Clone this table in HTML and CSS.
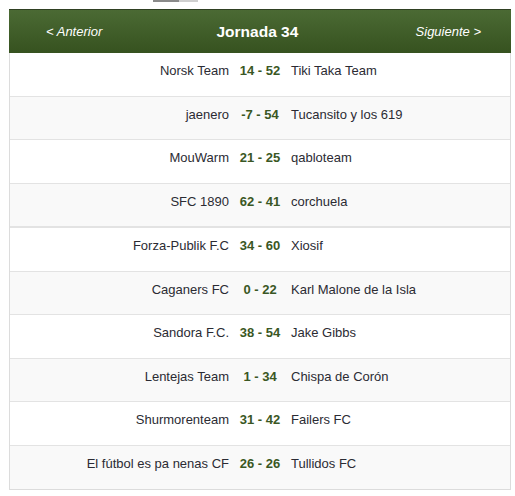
FILE: index.html
```html
<!DOCTYPE html>
<html lang="es">
<head>
<meta charset="utf-8">
<link rel="stylesheet" href="styles.css">
</head>
<body>
<div class="topbar"><span class="dark"></span><span class="light"></span></div>
<div class="fixtures">
  <div class="header">
    <a class="nav prev">&lt; Anterior</a>
    <span class="title">Jornada 34</span>
    <a class="nav next">Siguiente &gt;</a>
  </div>
  <div class="row"><span class="home">Norsk Team</span><span class="score">14 - 52</span><span class="away">Tiki Taka Team</span></div>
  <div class="row alt"><span class="home">jaenero</span><span class="score">-7 - 54</span><span class="away">Tucansito y los 619</span></div>
  <div class="row"><span class="home">MouWarm</span><span class="score">21 - 25</span><span class="away">qabloteam</span></div>
  <div class="row alt group-end"><span class="home">SFC 1890</span><span class="score">62 - 41</span><span class="away">corchuela</span></div>
  <div class="row"><span class="home">Forza-Publik F.C</span><span class="score">34 - 60</span><span class="away">Xiosif</span></div>
  <div class="row alt"><span class="home">Caganers FC</span><span class="score">0 - 22</span><span class="away">Karl Malone de la Isla</span></div>
  <div class="row"><span class="home">Sandora F.C.</span><span class="score">38 - 54</span><span class="away">Jake Gibbs</span></div>
  <div class="row alt"><span class="home">Lentejas Team</span><span class="score">1 - 34</span><span class="away">Chispa de Corón</span></div>
  <div class="row"><span class="home">Shurmorenteam</span><span class="score">31 - 42</span><span class="away">Failers FC</span></div>
  <div class="row alt"><span class="home">El fútbol es pa nenas CF</span><span class="score">26 - 26</span><span class="away">Tullidos FC</span></div>
</div>
</body>
</html>
```

FILE: styles.css
```css
html, body {
  margin: 0;
  padding: 0;
  background: #ffffff;
  font-family: "Liberation Sans", Arial, sans-serif;
}

.topbar {
  display: flex;
  height: 2px;
  margin-left: 153px;
  width: 45px;
}
.topbar .dark { width: 26px; background: #8a8a8a; }
.topbar .light { flex: 1; background: #cfcfcf; }

.fixtures {
  margin: 7px 4px 0 9px;
  width: 502px;
  box-sizing: border-box;
  border-left: 1px solid #dcdcdc;
  border-right: 1px solid #dcdcdc;
  border-bottom: 1px solid #dcdcdc;
}

.header {
  margin: 0 -1px;
  height: 43px;
  border-top: 1px solid #2f4022;
  background: linear-gradient(#4b6a34, #36521f);
  display: flex;
  align-items: center;
  justify-content: space-between;
  padding: 0 30px 0 37px;
  color: #ffffff;
}

.nav {
  font-size: 13px;
  font-style: italic;
  color: #ffffff;
}

.title {
  font-size: 15.5px;
  font-weight: bold;
  margin-left: -3px;
}

.row {
  display: grid;
  grid-template-columns: 1fr 62px 1fr;
  height: 32.5px;
  padding-top: 10px;
  line-height: 15px;
  font-size: 13px;
  color: #2b2b33;
  background: #ffffff;
  border-bottom: 1px solid #e3e3e3;
}
.row.alt { background: #f9f9f9; }
.row:last-child { border-bottom: none; height: 33.5px; }
.row.group-end { border-bottom: 2px solid #e3e3e3; }

.home { text-align: right; }
.score {
  text-align: center;
  font-weight: bold;
  color: #3a5724;
}
.away { text-align: left; }
```
